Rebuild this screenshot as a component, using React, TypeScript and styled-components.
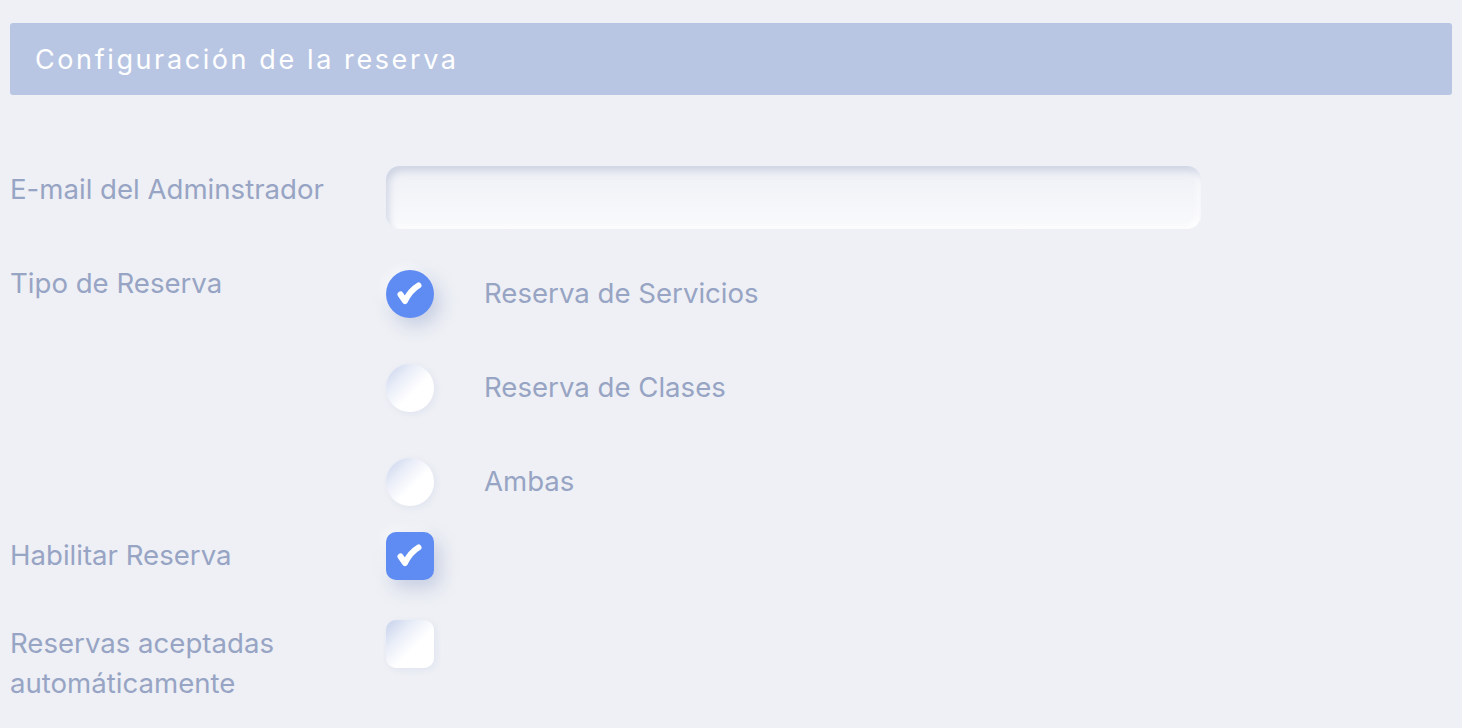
import React, { useState } from "react";
import styled, { createGlobalStyle } from "styled-components";

const Global = createGlobalStyle`
  html, body { margin: 0; padding: 0; background: #eef0f5; }
  body { font-family: Inter, "Noto Sans", sans-serif; -webkit-font-smoothing: antialiased; }
  * { box-sizing: border-box; }
`;

const Page = styled.div`
  padding: 23px 10px 0 10px;
  min-height: 728px;
  background: #eef0f5;
`;

const Header = styled.div`
  height: 72px;
  background: #b8c6e3;
  border-radius: 3px;
  display: flex;
  align-items: center;
  padding-left: 25px;
`;

const Title = styled.h1`
  margin: 0;
  font-family: Inter, sans-serif;
  font-weight: 400;
  font-size: 27px;
  letter-spacing: 2.6px;
  color: #ffffff;
`;

const Form = styled.div`
  display: flex;
  flex-direction: column;
`;

const Row = styled.div<{ $top: number }>`
  display: grid;
  grid-template-columns: 376px 1fr;
  align-items: start;
  margin-top: ${(p) => p.$top}px;
`;

const Label = styled.div<{ $pad?: number }>`
  font-size: 27.6px;
  line-height: 40px;
  color: #97a4c4;
  padding-top: ${(p) => p.$pad ?? 3}px;
`;

const Input = styled.input`
  width: 815px;
  height: 63px;
  border: none;
  outline: none;
  border-radius: 14px;
  background: linear-gradient(180deg, #eef0f6 0%, #f9fafc 100%);
  box-shadow: inset 3px 5px 7px rgba(180, 189, 214, 0.55),
    inset -3px -3px 6px rgba(255, 255, 255, 0.9);
  font-size: 22px;
  padding: 0 20px;
  color: #6b7899;
`;

const Group = styled.div`
  display: flex;
  flex-direction: column;
  gap: 46px;
  padding-top: 7px;
`;

const Option = styled.label`
  display: flex;
  align-items: center;
  gap: 50px;
  cursor: pointer;
`;

const OptionText = styled.span`
  font-size: 27.6px;
  line-height: 40px;
  padding-bottom: 2px;
  color: #97a4c4;
`;

const Mark = styled.div<{ $round: boolean; $on: boolean }>`
  width: 48px;
  height: 48px;
  flex: none;
  border-radius: ${(p) => (p.$round ? "50%" : "10px")};
  display: flex;
  align-items: center;
  justify-content: center;
  background: ${(p) =>
    p.$on
      ? "#5f8cf3"
      : "linear-gradient(135deg, #c5d0eb 0%, #e9edf8 30%, #ffffff 58%, #ffffff 100%)"};
  box-shadow: ${(p) =>
    p.$on
      ? "6px 8px 18px rgba(150, 165, 205, 0.45), -4px -4px 10px rgba(255,255,255,0.6)"
      : "2px 2px 6px rgba(200, 208, 228, 0.35)"};
`;

const Check = () => (
  <svg width="48" height="48" viewBox="0 0 48 48" aria-hidden>
    <path
      d="M14.5 24.5 L19 31 C22.5 24 26.5 19 32.5 15.5"
      fill="none"
      stroke="#ffffff"
      strokeWidth="6"
      strokeLinecap="round"
      strokeLinejoin="round"
    />
  </svg>
);

const options = ["Reserva de Servicios", "Reserva de Clases", "Ambas"];

export default function App() {
  const [tipo, setTipo] = useState(0);
  const [habilitar, setHabilitar] = useState(true);
  const [auto, setAuto] = useState(false);
  return (
    <>
      <Global />
      <Page>
        <Header>
          <Title>Configuración de la reserva</Title>
        </Header>
        <Form>
          <Row $top={71}>
            <Label>E-mail del Adminstrador</Label>
            <Input type="email" />
          </Row>
          <Row $top={34}>
            <Label $pad={0}>Tipo de Reserva</Label>
            <Group>
              {options.map((o, i) => (
                <Option key={o} onClick={() => setTipo(i)}>
                  <Mark $round $on={tipo === i}>{tipo === i && <Check />}</Mark>
                  <OptionText>{o}</OptionText>
                </Option>
              ))}
            </Group>
          </Row>
          <Row $top={26}>
            <Label>Habilitar Reserva</Label>
            <Mark $round={false} $on={habilitar} onClick={() => setHabilitar(!habilitar)}>
              {habilitar && <Check />}
            </Mark>
          </Row>
          <Row $top={40}>
            <Label>
              Reservas aceptadas
              <br />
              automáticamente
            </Label>
            <Mark $round={false} $on={auto} onClick={() => setAuto(!auto)}>
              {auto && <Check />}
            </Mark>
          </Row>
        </Form>
      </Page>
    </>
  );
}
